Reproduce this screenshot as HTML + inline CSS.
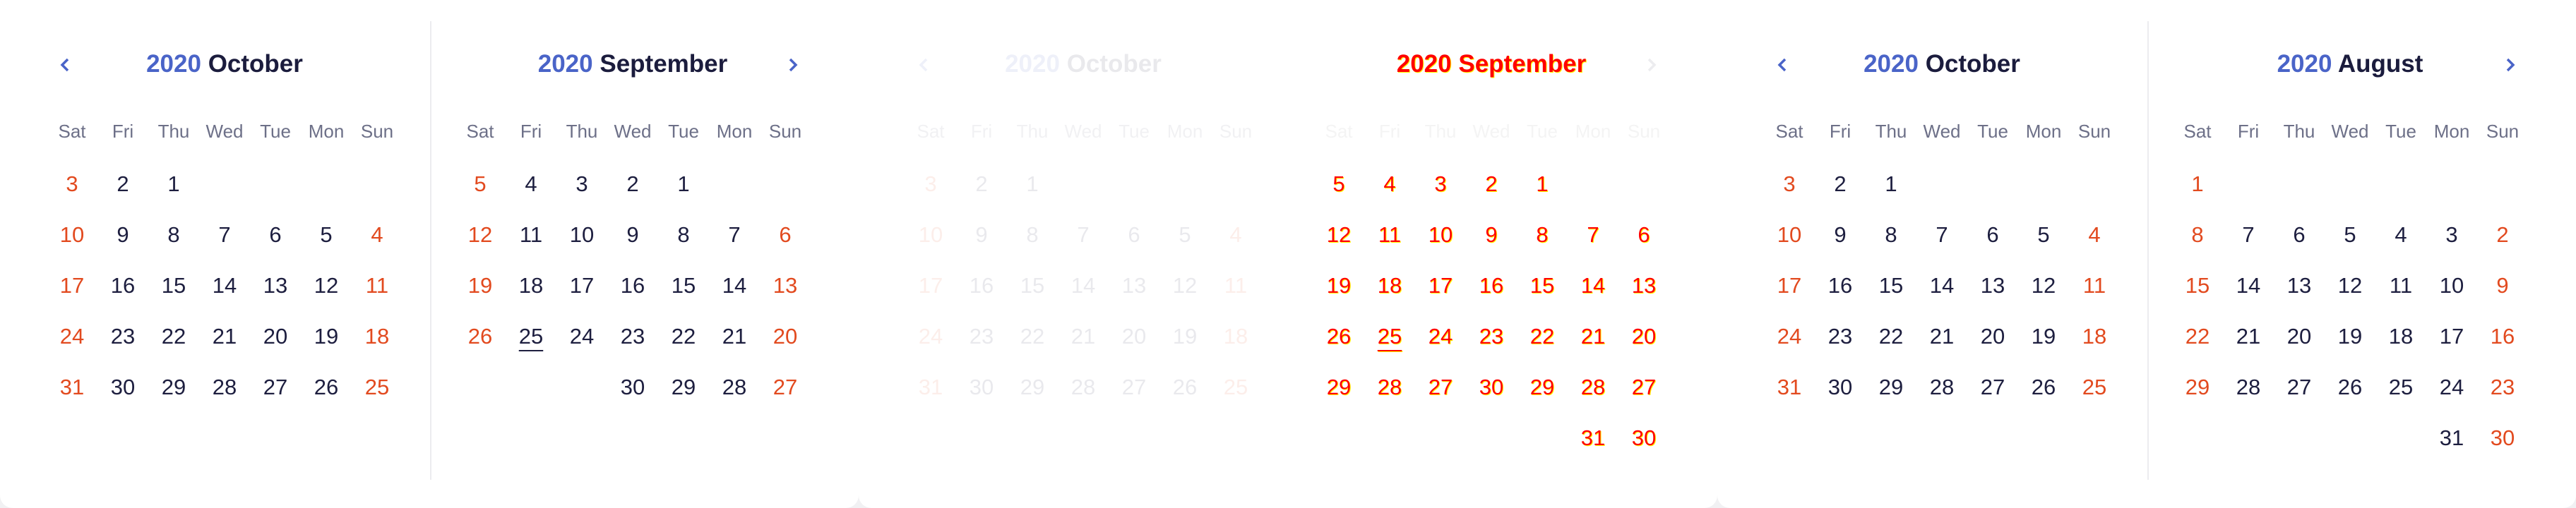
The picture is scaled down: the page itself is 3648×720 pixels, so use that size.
<!DOCTYPE html>
<html><head><meta charset="utf-8"><style>
*{margin:0;padding:0;box-sizing:border-box}
html,body{width:3648px;height:720px;overflow:hidden;background:#f1f1f3;font-family:"Liberation Sans",sans-serif}
.card{position:absolute;top:0;width:1216px;height:720px;background:#fff;border-radius:0 0 18px 18px}
.div{position:absolute;left:609px;top:30px;width:2px;height:650px;background:#ececef}
.p{position:absolute;top:0;width:504px}
.t{position:absolute;top:70px;left:0;width:504px;height:42px;line-height:42px;text-align:center;font-weight:bold;font-size:35px;color:#1b1c3d;white-space:nowrap}
.t b{color:#4a64c8}
.ch{position:absolute;top:80px;width:24px;height:24px}
.g{position:absolute;left:0;display:grid;grid-template-columns:repeat(7,72px);text-align:center}
.w{top:168px;font-size:26px;color:#6d7088;line-height:36px}
.d{top:225px;font-size:31px;color:#1d1e3f;grid-auto-rows:72px;line-height:72px}
.r{color:#e24a1f}
.u{text-decoration:underline;text-underline-offset:9px;text-decoration-thickness:2px}
.fade{opacity:.09}
.x .d span{color:#f00;font-weight:normal;text-shadow:1px 1px 0 #ff0}
.x .t,.x .t b{color:#f00;text-shadow:1px 1px 0 #ff0}
.x .w{color:#f4f4f4}
</style></head><body>

<div class="card" style="left:0">
 <div class="div"></div>
 <div class="p" style="left:66px">
  <svg class="ch" style="left:15px" viewBox="0 0 24 24"><path d="M15 4 L7 12 L15 20" fill="none" stroke="#4a64c8" stroke-width="3.5"/></svg>
  <div class="t"><b>2020</b> October</div>
  <div class="g w"><span>Sat</span><span>Fri</span><span>Thu</span><span>Wed</span><span>Tue</span><span>Mon</span><span>Sun</span></div>
  <div class="g d">
   <span class="r">3</span><span>2</span><span>1</span><span></span><span></span><span></span><span></span>
   <span class="r">10</span><span>9</span><span>8</span><span>7</span><span>6</span><span>5</span><span class="r">4</span>
   <span class="r">17</span><span>16</span><span>15</span><span>14</span><span>13</span><span>12</span><span class="r">11</span>
   <span class="r">24</span><span>23</span><span>22</span><span>21</span><span>20</span><span>19</span><span class="r">18</span>
   <span class="r">31</span><span>30</span><span>29</span><span>28</span><span>27</span><span>26</span><span class="r">25</span>
  </div>
 </div>
 <div class="p" style="left:644px">
  <svg class="ch" style="left:466px" viewBox="0 0 24 24"><path d="M9 4 L17 12 L9 20" fill="none" stroke="#4a64c8" stroke-width="3.5"/></svg>
  <div class="t"><b>2020</b> September</div>
  <div class="g w"><span>Sat</span><span>Fri</span><span>Thu</span><span>Wed</span><span>Tue</span><span>Mon</span><span>Sun</span></div>
  <div class="g d">
   <span class="r">5</span><span>4</span><span>3</span><span>2</span><span>1</span><span></span><span></span>
   <span class="r">12</span><span>11</span><span>10</span><span>9</span><span>8</span><span>7</span><span class="r">6</span>
   <span class="r">19</span><span>18</span><span>17</span><span>16</span><span>15</span><span>14</span><span class="r">13</span>
   <span class="r">26</span><span class="u">25</span><span>24</span><span>23</span><span>22</span><span>21</span><span class="r">20</span>
   <span></span><span></span><span></span><span>30</span><span>29</span><span>28</span><span class="r">27</span>
  </div>
 </div>
</div>

<div class="card" style="left:1216px">
 <div class="p fade" style="left:66px">
  <svg class="ch" style="left:15px" viewBox="0 0 24 24"><path d="M15 4 L7 12 L15 20" fill="none" stroke="#4a64c8" stroke-width="3.5"/></svg>
  <div class="t"><b>2020</b> October</div>
  <div class="g w"><span>Sat</span><span>Fri</span><span>Thu</span><span>Wed</span><span>Tue</span><span>Mon</span><span>Sun</span></div>
  <div class="g d">
   <span class="r">3</span><span>2</span><span>1</span><span></span><span></span><span></span><span></span>
   <span class="r">10</span><span>9</span><span>8</span><span>7</span><span>6</span><span>5</span><span class="r">4</span>
   <span class="r">17</span><span>16</span><span>15</span><span>14</span><span>13</span><span>12</span><span class="r">11</span>
   <span class="r">24</span><span>23</span><span>22</span><span>21</span><span>20</span><span>19</span><span class="r">18</span>
   <span class="r">31</span><span>30</span><span>29</span><span>28</span><span>27</span><span>26</span><span class="r">25</span>
  </div>
 </div>
 <div class="p x" style="left:644px">
  <svg class="ch" style="left:466px" viewBox="0 0 24 24"><path d="M9 4 L17 12 L9 20" fill="none" stroke="#ececef" stroke-width="3.5"/></svg>
  <div class="t"><b>2020</b> September</div>
  <div class="g w"><span>Sat</span><span>Fri</span><span>Thu</span><span>Wed</span><span>Tue</span><span>Mon</span><span>Sun</span></div>
  <div class="g d">
   <span>5</span><span>4</span><span>3</span><span>2</span><span>1</span><span></span><span></span>
   <span>12</span><span>11</span><span>10</span><span>9</span><span>8</span><span>7</span><span>6</span>
   <span>19</span><span>18</span><span>17</span><span>16</span><span>15</span><span>14</span><span>13</span>
   <span>26</span><span class="u">25</span><span>24</span><span>23</span><span>22</span><span>21</span><span>20</span>
   <span>29</span><span>28</span><span>27</span><span>30</span><span>29</span><span>28</span><span>27</span>
   <span></span><span></span><span></span><span></span><span></span><span>31</span><span>30</span>
  </div>
 </div>
</div>

<div class="card" style="left:2432px">
 <div class="div"></div>
 <div class="p" style="left:66px">
  <svg class="ch" style="left:15px" viewBox="0 0 24 24"><path d="M15 4 L7 12 L15 20" fill="none" stroke="#4a64c8" stroke-width="3.5"/></svg>
  <div class="t"><b>2020</b> October</div>
  <div class="g w"><span>Sat</span><span>Fri</span><span>Thu</span><span>Wed</span><span>Tue</span><span>Mon</span><span>Sun</span></div>
  <div class="g d">
   <span class="r">3</span><span>2</span><span>1</span><span></span><span></span><span></span><span></span>
   <span class="r">10</span><span>9</span><span>8</span><span>7</span><span>6</span><span>5</span><span class="r">4</span>
   <span class="r">17</span><span>16</span><span>15</span><span>14</span><span>13</span><span>12</span><span class="r">11</span>
   <span class="r">24</span><span>23</span><span>22</span><span>21</span><span>20</span><span>19</span><span class="r">18</span>
   <span class="r">31</span><span>30</span><span>29</span><span>28</span><span>27</span><span>26</span><span class="r">25</span>
  </div>
 </div>
 <div class="p" style="left:644px">
  <svg class="ch" style="left:466px" viewBox="0 0 24 24"><path d="M9 4 L17 12 L9 20" fill="none" stroke="#4a64c8" stroke-width="3.5"/></svg>
  <div class="t"><b>2020</b> August</div>
  <div class="g w"><span>Sat</span><span>Fri</span><span>Thu</span><span>Wed</span><span>Tue</span><span>Mon</span><span>Sun</span></div>
  <div class="g d">
   <span class="r">1</span><span></span><span></span><span></span><span></span><span></span><span></span>
   <span class="r">8</span><span>7</span><span>6</span><span>5</span><span>4</span><span>3</span><span class="r">2</span>
   <span class="r">15</span><span>14</span><span>13</span><span>12</span><span>11</span><span>10</span><span class="r">9</span>
   <span class="r">22</span><span>21</span><span>20</span><span>19</span><span>18</span><span>17</span><span class="r">16</span>
   <span class="r">29</span><span>28</span><span>27</span><span>26</span><span>25</span><span>24</span><span class="r">23</span>
   <span></span><span></span><span></span><span></span><span></span><span>31</span><span class="r">30</span>
  </div>
 </div>
</div>
</body></html>
